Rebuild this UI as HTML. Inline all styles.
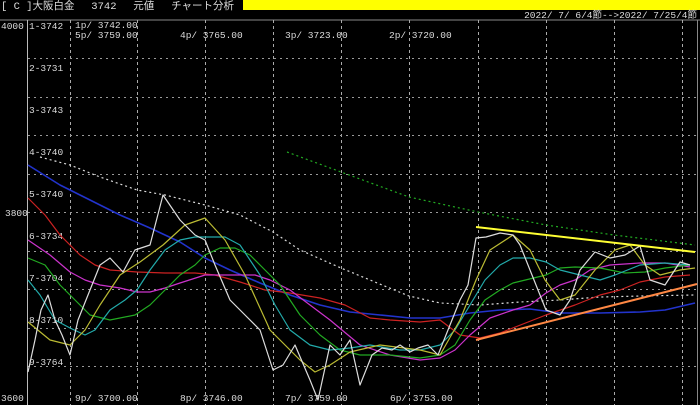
<!DOCTYPE html>
<html><head><meta charset="utf-8"><style>
html,body{margin:0;padding:0;background:#000;width:700px;height:405px;overflow:hidden}
svg{display:block}
text{font-family:"Liberation Mono","Noto Sans CJK JP",monospace;font-size:9.5px;fill:#ddd}
</style></head><body>
<svg width="700" height="405" viewBox="0 0 700 405" xmlns="http://www.w3.org/2000/svg">
<rect width="700" height="405" fill="#000"/>
<rect x="243" y="0" width="457" height="10" fill="#ffff00"/>
<text x="1" y="9" style="font-size:10.5px">[ C ]大阪白金　 3742　 元値　 チャート分析</text>
<text x="697" y="18" text-anchor="end" style="font-size:9.5px">2022/ 7/ 6/4節-->2022/ 7/25/4節</text>
<line x1="0" y1="20" x2="700" y2="20" stroke="#888" stroke-width="1"/>
<line x1="27.5" y1="20" x2="27.5" y2="405" stroke="#bbb" stroke-width="1"/>
<line x1="697.5" y1="20" x2="697.5" y2="405" stroke="#888" stroke-width="1"/>
<g stroke="#aaa" stroke-width="1" stroke-dasharray="3,3">
<line x1="70.5" y1="20" x2="70.5" y2="405"/><line x1="137.5" y1="20" x2="137.5" y2="405"/>
<line x1="205.5" y1="20" x2="205.5" y2="405"/><line x1="273.5" y1="20" x2="273.5" y2="405"/>
<line x1="341.5" y1="20" x2="341.5" y2="405"/><line x1="409.5" y1="20" x2="409.5" y2="405"/>
<line x1="478.5" y1="20" x2="478.5" y2="405"/><line x1="546.5" y1="20" x2="546.5" y2="405"/>
<line x1="614.5" y1="20" x2="614.5" y2="405"/><line x1="682.5" y1="20" x2="682.5" y2="405"/>
</g>
<g stroke="#999" stroke-width="1" stroke-dasharray="2,4">
<line x1="28" y1="58.5" x2="697" y2="58.5"/><line x1="28" y1="97.5" x2="697" y2="97.5"/>
<line x1="28" y1="135.5" x2="697" y2="135.5"/><line x1="28" y1="174.5" x2="697" y2="174.5"/>
<line x1="28" y1="212.5" x2="697" y2="212.5"/><line x1="28" y1="251.5" x2="697" y2="251.5"/>
<line x1="28" y1="289.5" x2="697" y2="289.5"/><line x1="28" y1="328.5" x2="697" y2="328.5"/>
<line x1="28" y1="366.5" x2="697" y2="366.5"/>
</g>
<text x="1" y="29">4000</text><text x="5" y="216">3800</text><text x="1" y="401">3600</text>
<text x="29" y="29">1-3742</text><text x="29" y="71">2-3731</text><text x="29" y="113">3-3743</text>
<text x="29" y="155">4-3740</text><text x="29" y="197">5-3740</text><text x="29" y="239">6-3734</text>
<text x="29" y="281">7-3704</text><text x="29" y="323">8-3710</text><text x="29" y="365">9-3764</text>
<text x="75" y="28">1p/ 3742.00</text><text x="75" y="38">5p/ 3759.00</text>
<text x="180" y="38">4p/ 3765.00</text><text x="285" y="38">3p/ 3723.00</text>
<text x="389" y="38">2p/ 3720.00</text>
<text x="75" y="401">9p/ 3700.00</text><text x="180" y="401">8p/ 3746.00</text>
<text x="285" y="401">7p/ 3759.00</text><text x="390" y="401">6p/ 3753.00</text>
<g fill="none" stroke-width="1.2" stroke-linejoin="round">
<polyline stroke="#ddd" stroke-dasharray="2,3" points="40,157 70,165 100,177 137,190 165,195 205,205 240,215 273,232 300,250 341,268 370,280 409,296 440,303 480,305 520,302 560,300 600,297 640,296 695,295"/>
<polyline stroke="#22aa22" stroke-dasharray="2,3" points="287,152 341,172 409,197 478,212 546,225 614,235 695,245"/>
<polyline stroke="#2233cc" stroke-width="1.6" points="28,165 60,185 90,200 120,215 150,228 180,242 205,258 230,270 260,283 290,295 320,305 350,312 380,315 410,318 440,318 470,313 500,310 530,309 560,313 600,313 640,312 665,310 695,303"/>
<polyline stroke="#cc2222" points="28,198 45,215 60,235 80,255 95,265 110,270 137,272 165,273 195,273 215,275 240,282 265,290 290,293 320,298 345,305 370,318 390,320 420,322 440,320 460,335 480,338 500,333 546,315 575,305 600,295 620,290 640,282 665,277 690,275"/>
<polyline stroke="#cc33cc" points="28,240 50,255 70,272 85,280 100,285 120,288 137,292 150,292 165,288 180,283 205,275 230,275 255,275 270,280 290,290 310,305 330,320 360,345 390,355 420,360 440,358 455,350 470,335 490,318 513,310 530,305 546,293 560,285 575,280 590,270 610,265 640,263 665,263 690,267"/>
<polyline stroke="#22aa22" points="28,258 45,265 60,285 75,300 90,315 110,320 135,315 150,305 165,290 180,275 195,265 205,255 220,248 235,248 250,255 265,270 280,285 300,315 320,335 340,350 360,355 390,355 420,358 440,355 455,345 470,320 485,300 500,290 513,283 546,275 560,268 575,267 600,268 625,273 645,272 665,268 690,265"/>
<polyline stroke="#22aaaa" points="28,280 40,295 55,320 70,328 85,335 95,330 110,310 125,300 137,290 150,270 165,250 180,240 195,237 210,237 225,237 240,245 260,275 275,305 290,330 310,345 330,350 350,348 370,345 400,350 420,350 440,345 455,330 470,305 485,280 500,265 513,258 530,258 546,262 560,270 580,275 600,280 615,275 640,265 665,263 690,265"/>
<polyline stroke="#bbbb33" points="28,322 50,340 70,345 85,330 100,305 120,275 140,262 163,245 185,225 205,218 225,240 245,275 270,330 300,360 315,372 330,365 350,352 380,345 420,350 440,355 460,320 476,280 490,250 513,235 530,250 545,280 560,300 575,295 595,270 615,250 630,245 645,265 660,275 680,270 695,268"/>
<polyline stroke="#dddddd" points="28,372 35,340 41,310 48,295 55,320 62,335 70,355 78,320 90,290 100,265 110,258 123,272 135,250 150,245 163,195 180,220 195,235 205,240 215,265 230,300 245,315 260,330 273,370 283,365 295,345 310,380 318,400 330,345 340,355 350,340 360,385 372,355 382,348 392,350 400,345 410,352 418,348 428,345 438,355 448,330 460,300 468,285 476,238 486,237 500,233 513,235 520,245 532,275 546,310 560,315 570,300 580,270 595,252 610,258 625,255 640,246 650,280 665,285 680,262 690,265"/>
<line x1="476" y1="227" x2="695" y2="252" stroke="#ffff33" stroke-width="2"/>
<line x1="476" y1="340" x2="697" y2="284" stroke="#ff8844" stroke-width="2"/>
</g>
</svg>
</body></html>
